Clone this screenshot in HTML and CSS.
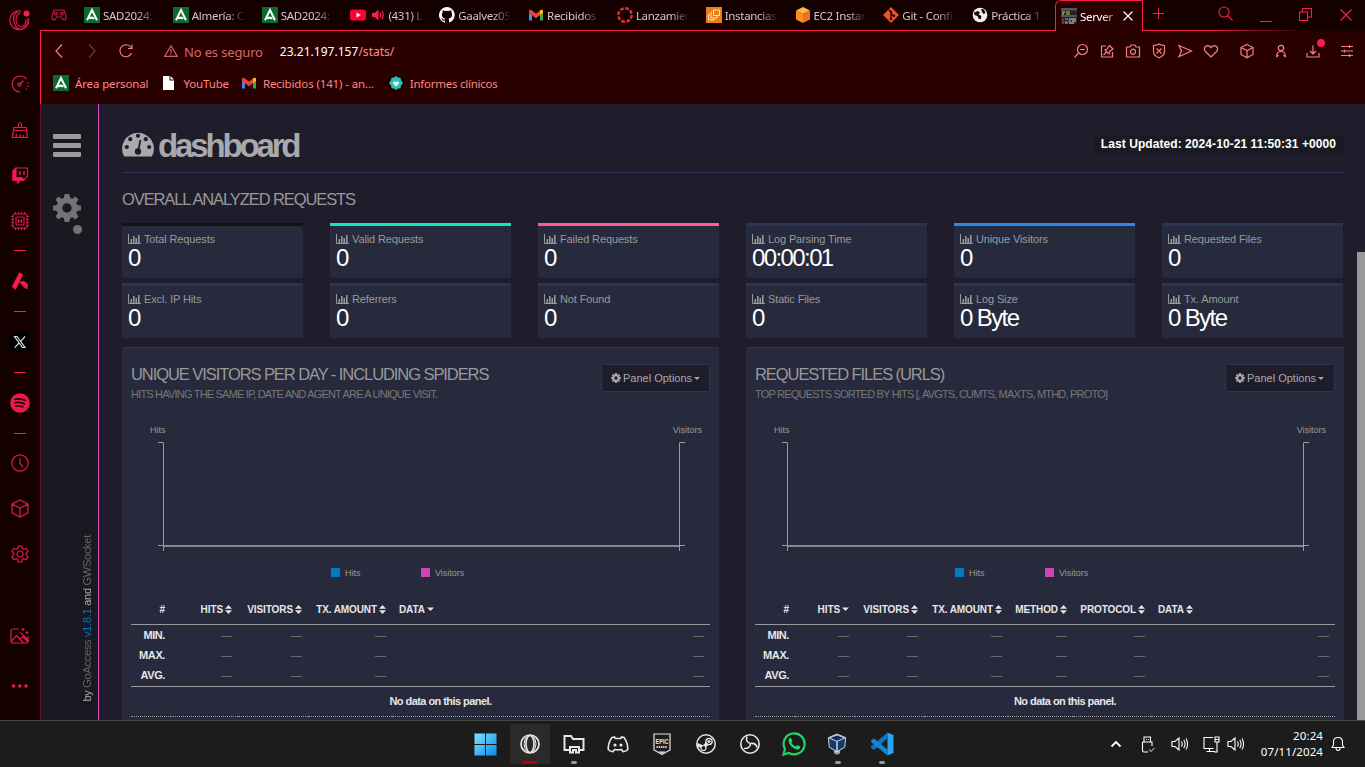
FILE: index.html
```html
<!DOCTYPE html>
<html lang="es">
<head>
<meta charset="utf-8">
<title>Server Statistics</title>
<link rel="stylesheet" href="styles.css">
</head>
<body>
<svg class="defs" aria-hidden="true">
  <symbol id="i-junta" viewBox="0 0 16 16"><rect width="16" height="16" fill="#0b6b2c"/><path d="M3 13.2 8 3l5 10.2M5 11.5q3.500-2 5 .5" fill="none" stroke="#fff" stroke-width="2"/></symbol>
  <symbol id="i-gmail" viewBox="0 0 16 16"><path d="M1 4.500h3V13.500H1z" fill="#4285f4"/><path d="M12 4.500h3v9h-3z" fill="#34a853"/><path d="M1 3.500Q2 2 4 3.500l4 3 4-3Q14 2 15 3.500V6l-7 5.200L1 6z" fill="#ea4335"/><path d="M12 3.500Q14 2 15 3.500V6l-3 2.200z" fill="#fbbc04"/></symbol>
  <symbol id="i-bars" viewBox="0 0 13 11"><path d="M.5 0v9.500H13" fill="none" stroke="currentColor"/><path d="M2.500 5h1.600v4H2.500zM5 2h1.600v7H5zM7.500 4h1.600v5H7.500zM10 1h1.600v8H10z" fill="currentColor"/></symbol>
  <symbol id="i-gear" viewBox="0 0 28 28"><path fill="currentColor" fill-rule="evenodd" d="M11.700 0h4.600l.8 3.800 2.200.9L22.500 2.500l3 3-2.200 3.200.9 2.200 3.800.8v4.600l-3.800.8-.9 2.200 2.200 3.200-3 3-3.200-2.200-2.200.9-.8 3.800h-4.600l-.8-3.800-2.200-.9-3.200 2.200-3-3 2.200-3.200-.9-2.200L0 16.300v-4.600l3.800-.8.9-2.200L2.500 5.500l3-3 3.200 2.200 2.200-.9zM14 9.300a4.700 4.700 0 1 0 0 9.400 4.700 4.700 0 0 0 0-9.400z"/></symbol>
  <symbol id="i-sort" viewBox="0 0 7 9"><path d="M0 3.700 3.500 0 7 3.700zM0 5.200 3.500 9 7 5.200z" fill="currentColor"/></symbol>
  <symbol id="i-down" viewBox="0 0 7 9"><path d="M0 2.500h7L3.500 6z" fill="currentColor"/></symbol>
  <symbol id="i-cube" viewBox="0 0 18 18"><path d="M9 1l7.500 3.800v8.400L9 17l-7.500-3.800V4.800zM1.500 4.800 9 8.500l7.500-3.700M9 8.500V17" fill="none" stroke="currentColor" stroke-width="1.200"/></symbol>
  <symbol id="i-speaker" viewBox="0 0 18 16"><path d="M1 5.500h3l4-3.500v12l-4-3.500H1zM10.500 5.500q1.500 2.500 0 5M12.800 4q2.500 4 0 8M15 2.500q3.200 5.500 0 11" fill="none" stroke="currentColor" stroke-width="1.100"/></symbol>
  <symbol id="i-axes" viewBox="0 0 579 112"><path d="M27 2.500h5.500V111M27 105.500h5.500M554 2.500h-5.500V111M554 105.500h-5.500" fill="none" stroke="#999"/><path d="M32 106h516" stroke="#999" stroke-width="2" opacity=".85"/></symbol>
</svg>

<div class="screen">
  <div class="browser">
    <nav class="rail">
      <div class="slot logo"><svg width="22" height="22" viewBox="0 0 22 22" fill="none" stroke="#dc1c47" stroke-width="1.200"><path d="M12 2a9.400 9.400 0 1 0 7.600 8"/><path d="M11.500 3.500q-5 2.500-4.500 8t6 7M13 17.500q4-1.500 4-7"/><path d="M9 2.500Q3 6 5 13t6 7M19 9q1 7-5 10"/><circle cx="17.500" cy="4.500" r="3" style="fill:#fa1e4e;stroke:none"/></svg></div>
      <div class="slot first"><svg width="18" height="18" viewBox="0 0 18 18"><path d="M9.500 17A8 8 0 1 1 15.500 4M17 7v1.500M17 10.500V12M15.800 13.700l-.8.9M8.500 9.500l4-4"/><circle cx="8.500" cy="9.500" r="1.700"/></svg></div>
      <div class="slot"><svg width="18" height="18" viewBox="0 0 18 18"><path d="M7.500 6.500V3q1.500-2.500 3 0v3.500M2.500 6.500h13v3h-13zM2.500 9.500 1.500 16.500h15l-1-7M5 16l.5-3M9 16v-3M12.500 16v-2"/></svg></div>
      <div class="slot twitch"><svg width="18" height="18" viewBox="0 0 18 18"><path d="M5 2h11.500v8.500l-4 4H9l-2.500 2.500v-2.500H2V5z"/><path d="M2 5l3-3v9.500H10l3 1.500-1 1.500H9L6.500 17v-2.500H2z" fill="#fa1e4e"/><path d="M9 5v4M13 5v4" stroke-width="1.500"/></svg></div>
      <div class="slot"><svg width="20" height="20" viewBox="0 0 20 20"><rect x="3" y="3" width="14" height="14" rx="2"/><rect x="6" y="6" width="8" height="8" rx="1"/><path d="M8.500 8v4M11.500 8v4M8.500 10h3M1 5.500h2M1 8.500h2M1 11.500h2M1 14.500h2M17 5.500h2M17 8.500h2M17 11.500h2M17 14.500h2M5.500 1v2M8.500 1v2M11.500 1v2M14.500 1v2M5.500 17v2M8.500 17v2M11.500 17v2M14.500 17v2"/></svg></div>
      <i class="dash one"></i>
      <div class="slot tall"><svg width="18" height="18" viewBox="0 0 18 18"><path d="M8.500 1 11.500 3 4.500 17 1.500 14.500zM9 10.500q5-2.500 7.500 2.500l-.5 3.500q-2.500-1-3.700-2.700T9 10.500z" fill="#fa1e4e" stroke-linejoin="round"/></svg></div>
      <i class="dash"></i>
      <div class="slot tall"><span class="xbox"><svg class="xlogo" width="14" height="14" viewBox="0 0 14 14"><path d="M1.500 1.500h2.500l8 11h-2.500zM12 1.500 7.700 6.300M6 8l-4.300 4.700"/></svg></span></div>
      <i class="dash"></i>
      <div class="slot tall"><svg width="20" height="20" viewBox="0 0 20 20"><circle cx="10" cy="10" r="9.800" fill="#ec1b4b" stroke="none"/><path d="M4 6.500q6.500-1.800 12 1.200M4.500 10q5.500-1.500 10.500 1.200M5 13.200q4.500-1 8.500 1" stroke="#300010" stroke-width="1.800"/></svg></div>
      <i class="dash"></i>
      <div class="slot hist"><svg width="18" height="18" viewBox="0 0 18 18"><circle cx="9" cy="9" r="8.200"/><path d="M9 4.500v4.800l3 3.700"/></svg></div>
      <div class="slot low"><svg width="20" height="19"><use href="#i-cube"/></svg></div>
      <div class="slot low"><svg width="18" height="18" viewBox="0 0 18 18"><path d="M7.300 1h3.400l.6 2.500 1.500.8 2.500-.8 1.700 3L15.200 8.200v1.600l1.800 1.700-1.700 3-2.500-.8-1.500.8-.6 2.500H7.300l-.6-2.500-1.500-.8-2.500.8-1.700-3 1.800-1.700V8.200L1 6.500l1.700-3 2.500.8 1.500-.8z"/><circle cx="9" cy="9" r="3"/></svg></div>
      <div class="slot pic"><svg width="20" height="18" viewBox="0 0 20 18"><path d="M9 2H3Q1 2 1 4v10q0 2 2 2h13q2 0 2-2V9M1.500 14l5-5.500 7 7.500M10 12l3-2.500 4.500 5M11 6l8 8M13 1v3M11.500 2.500h3M17 4v3M15.500 5.500h3M10 5v.8"/></svg></div>
      <div class="slot more"><svg width="18" height="6" viewBox="0 0 18 6"><g fill="#fa1e4e" stroke="none"><circle cx="2.500" cy="3" r="1.700"/><circle cx="8.800" cy="3" r="1.700"/><circle cx="15" cy="3" r="1.700"/></g></svg></div>
    </nav>

    <div class="window">
      <header class="tabs">
        <span class="gx"><svg width="16" height="12" viewBox="0 0 16 12" fill="none" stroke="#c01a40" stroke-width="1.200"><path d="M3.500 1h9Q14.500 3 15 9q-1 3-3 1.500L10.500 8h-5L4 10.500Q2 12 1 9 1.500 3 3.500 1z"/><circle cx="5" cy="4.700" r="1.300"/><circle cx="11" cy="4.700" r="1.300"/></svg></span>
        <div class="tab"><svg><use href="#i-junta"/></svg><span>SAD2024:</span></div>
        <div class="tab"><svg><use href="#i-junta"/></svg><span>Almería: C</span></div>
        <div class="tab"><svg><use href="#i-junta"/></svg><span>SAD2024:</span></div>
        <div class="tab"><svg viewBox="0 0 16 16"><rect y="2.500" width="16" height="11" rx="3" fill="#f03"/><path d="M6.500 5.500 11 8l-4.500 2.500z" fill="#fff"/></svg><svg class="snd" viewBox="0 0 14 14"><path d="M1 5h2.500L7.500 1.500v11L3.500 9H1z" fill="#fa1e4e"/><path d="M9 4.500q1.500 2.500 0 5M11 3q2.500 4 0 8" fill="none" stroke="#fa1e4e" stroke-width="1.300"/></svg><span>(431) L</span></div>
        <div class="tab"><svg viewBox="0 0 16 16"><path fill="#fff" d="M8 0a8 8 0 0 0-2.500 15.600c.4 0 .5-.2.5-.4v-1.500c-2.200.5-2.700-1-2.700-1-.4-.9-.9-1.200-.9-1.200-.7-.5.100-.5.100-.5.8.100 1.200.8 1.200.8.700 1.200 1.900.9 2.300.7.100-.5.300-.9.500-1.100-1.800-.2-3.600-.9-3.600-4 0-.9.300-1.600.8-2.100-.100-.2-.4-1 .100-2.100 0 0 .7-.2 2.200.8a7.500 7.500 0 0 1 4 0c1.500-1 2.200-.8 2.200-.8.500 1.100.200 1.900.1 2.100.5.600.8 1.300.8 2.100 0 3.100-1.900 3.700-3.600 3.900.3.300.5.800.5 1.500v2.300c0 .2.100.5.500.4A8 8 0 0 0 8 0z"/></svg><span>Gaalvez05</span></div>
        <div class="tab"><svg><use href="#i-gmail"/></svg><span>Recibidos</span></div>
        <div class="tab"><svg viewBox="0 0 16 16"><circle cx="8" cy="8" r="6.700" fill="none" stroke="#e0322d" stroke-width="2.500" stroke-dasharray="3.700 1.560"/></svg><span>Lanzamien</span></div>
        <div class="tab"><svg viewBox="0 0 16 16"><rect width="16" height="16" fill="#ed7d10"/><path d="M7.500 3h6v5.500h-6zM6 5.500H5V11h6V9M4 7.500H2.500V13H8v-1.500" fill="none" stroke="#ffe3c4"/></svg><span>Instancias</span></div>
        <div class="tab"><svg viewBox="0 0 16 16"><path d="M8 0l7 3.500L8 7 1 3.500z" fill="#ffb74a"/><path d="M1 3.500 8 7v9l-7-3.500z" fill="#fb9122"/><path d="M15 3.500 8 7v9l7-3.500z" fill="#f5701b"/></svg><span>EC2 Instan</span></div>
        <div class="tab"><svg viewBox="0 0 16 16"><path d="M8 0l8 8-8 8-8-8z" fill="#f34f29"/><path d="M5.500 2.500 8 5v7M8 6.500l3 3" fill="none" stroke="#1b0000" stroke-width="1.200"/><circle cx="8" cy="5" r="1.200" fill="#1b0000"/><circle cx="8" cy="12" r="1.200" fill="#1b0000"/><circle cx="11" cy="8.800" r="1.200" fill="#1b0000"/></svg><span>Git - Confi</span></div>
        <div class="tab"><svg viewBox="0 0 16 16"><circle cx="8" cy="8" r="7.300" fill="#eef0f2"/><path d="M2 5.500 6 4l2 1.500-1.500 2 3 1.500-1 3.500-2-1L5.500 9 2.500 8zM9 2l3 .5 1.500 3.500-2 1-1.500-2z" fill="#1b0000"/></svg><span>Práctica 1.</span></div>
        <div class="tab active"><svg viewBox="0 0 16 16"><rect width="16" height="16" fill="#222"/><path d="M0 0h16v2.500H0zM0 7h16v2H0z" fill="#555"/><path d="M1 4h3M1 6h2" stroke="#ddd"/><path d="M5 4h4M5 6h4M4 14h2" stroke="#a6d81c"/><path d="M1 11h2M1 13h2M1 15h2" stroke="#fa1e6e"/><path d="M4 11h3M7 13h3M4 15h3" stroke="#8ad"/><path d="M8 11h7M11 13h4M8 15h5" stroke="#ddd"/></svg><span>Server</span><svg class="x" viewBox="0 0 10 10"><path d="M.5.5l9 9M9.500.5l-9 9" stroke="#fff" stroke-width="1.200"/></svg></div>
        <div class="tabend">
          <svg width="11" height="11" viewBox="0 0 11 11"><path d="M5.500 0v11M0 5.500h11"/></svg>
          <svg class="find" width="15" height="15" viewBox="0 0 15 15"><circle cx="6" cy="6" r="5"/><path d="M9.500 9.500 14.500 14.500"/></svg>
          <svg class="min" width="12" height="12" viewBox="0 0 12 12"><path d="M0 10.500h12"/></svg>
          <svg class="max" width="13" height="13" viewBox="0 0 13 13"><path d="M.5 4h8v8.500h-8zM3.500 4V.500h9v8.500H8.500"/></svg>
          <svg class="cls" width="12" height="12" viewBox="0 0 12 12"><path d="M.5.5l11 11M11.500.5l-11 11"/></svg>
        </div>
      </header>

      <div class="toolbar">
        <div class="address">
          <svg width="8" height="14" viewBox="0 0 8 14"><path d="M7 .5 1 7l6 6.500"/></svg>
          <svg class="fwd" width="8" height="14" viewBox="0 0 8 14"><path d="M1 .5 7 7l-6 6.500"/></svg>
          <svg class="reload" width="14" height="14" viewBox="0 0 14 14"><path d="M12.500 9A6 6 0 1 1 12 3.500M13 .5v4H9"/></svg>
          <svg class="warn" width="14" height="12" viewBox="0 0 14 12"><path d="M7 .8 13.200 11.300H.8zM7 4v4M7 9v1"/></svg>
          <span class="insecure">No es seguro</span>
          <span class="url"><b>23.21.197.157</b>/stats/</span>
          <div class="tools">
            <svg viewBox="0 0 16 16"><circle cx="9.500" cy="6.500" r="5"/><path d="M5.500 10 1.500 14.500M7 6.500h5"/></svg>
            <svg viewBox="0 0 16 16"><path d="M7 3H2.500v11h11V9M4.500 12l3-3M6 7l4 4 1-3 3-2-3.500-3.500L8 6z"/></svg>
            <svg viewBox="0 0 16 16"><path d="M1.500 4H5l1-2h4l1 2h3.500v10h-13z"/><circle cx="8" cy="8.700" r="2.500"/></svg>
            <svg viewBox="0 0 16 16"><path d="M8 1q2.500 1.500 5.500 1.500v6Q13.500 12.500 8 15 2.500 12.500 2.500 8.500v-6Q5.500 2.500 8 1zM5.500 5.500l5 5M10.500 5.500l-5 5"/></svg>
            <svg viewBox="0 0 16 16"><path d="M2 2.500 14.500 8 2 13.500 4.500 8z"/></svg>
            <svg viewBox="0 0 16 16"><path d="M8 14 2.200 8.300Q.5 5.500 2.500 3.500 5.500 1.500 8 4.500q2.500-3 5.500-1 2 2 .3 4.800z"/></svg>
            <svg class="cube" viewBox="0 0 16 16"><path d="M8 1.500l6 3v7L8 14.700l-6-3.200v-7zM2 4.500l6 3 6-3M8 7.500v7"/></svg>
            <svg class="user" viewBox="0 0 16 16"><circle cx="8" cy="5" r="2.700"/><path d="M3.500 14Q3.500 8.500 8 8.500t4.500 5.500M3.500 14l2-2M12.500 14l-2-2"/></svg>
            <span class="dl"><svg viewBox="0 0 16 16"><path d="M2 10v4h12v-4M8 2.500V11M5 8l3 3 3-3"/></svg></span>
            <svg class="menu" viewBox="0 0 16 16"><path d="M2 3.500h12M2 8h12M2 12.500h12M10.500 2v3M5.500 6.500v3M10.500 11v3"/></svg>
          </div>
        </div>
        <div class="bookmarks">
          <a><svg><use href="#i-junta"/></svg>Área personal</a>
          <a class="b2"><svg viewBox="0 0 16 16"><path d="M2 1h6.500v4.500H13V15H2z" fill="#fff"/><path d="M9.500 1 13 4.500H9.500z" fill="#fff"/></svg>YouTube</a>
          <a class="b3"><svg><use href="#i-gmail"/></svg>Recibidos (141) - an...</a>
          <a class="b4"><svg viewBox="0 0 16 16"><path d="M8 1l2 1.500 2.500.2.500 2.500L15 8l-2 2.500-.5 2.700-2.500.3L8 15l-2-1.500-2.500-.3L3 10.500 1 8l2-2.800.5-2.500L6 2.500z" fill="#27c4bd"/><path d="M8 11.500 5 8.300Q5 5.500 8 7q3-1.500 3 1.300z" fill="#fff"/></svg>Informes clínicos</a>
        </div>
      </div>

      <div class="page">
        <aside class="side">
          <div class="burger"><i></i><i></i><i></i></div>
          <svg class="cog"><use href="#i-gear"/></svg>
          <i class="dot"></i>
          <p class="by">by <span>GoAccess</span> <a>v1.8.1</a> and <span>GWSocket</span></p>
        </aside>
        <main class="main">
          <div class="head">
            <h1><svg width="32" height="26" viewBox="0 0 32 26"><path fill="#a9a9ab" d="M2.200 25.600A15.900 15.900 0 1 1 29.800 25.600z"/><g fill="#1f1d2c"><circle cx="4.800" cy="16" r="2.100"/><circle cx="8.200" cy="8.200" r="2.100"/><circle cx="16" cy="4.800" r="2.100"/><circle cx="23.800" cy="8.200" r="2.100"/><circle cx="27.200" cy="16" r="2.100"/><circle cx="16" cy="20.500" r="3.200"/></g><path d="M16 20.500 18.500 9" stroke="#1f1d2c" stroke-width="1.800"/></svg>dashboard</h1>
            <span class="updated">Last Updated: 2024-10-21 11:50:31 +0000</span>
          </div>
          <h2>OVERALL ANALYZED REQUESTS</h2>
          <div class="cards">
            <div class="card black"><p><svg><use href="#i-bars"/></svg>Total Requests</p><b>0</b></div>
            <div class="card green"><p><svg><use href="#i-bars"/></svg>Valid Requests</p><b>0</b></div>
            <div class="card red"><p><svg><use href="#i-bars"/></svg>Failed Requests</p><b>0</b></div>
            <div class="card"><p><svg><use href="#i-bars"/></svg>Log Parsing Time</p><b>00:00:01</b></div>
            <div class="card blue"><p><svg><use href="#i-bars"/></svg>Unique Visitors</p><b>0</b></div>
            <div class="card"><p><svg><use href="#i-bars"/></svg>Requested Files</p><b>0</b></div>
            <div class="card"><p><svg><use href="#i-bars"/></svg>Excl. IP Hits</p><b>0</b></div>
            <div class="card"><p><svg><use href="#i-bars"/></svg>Referrers</p><b>0</b></div>
            <div class="card"><p><svg><use href="#i-bars"/></svg>Not Found</p><b>0</b></div>
            <div class="card"><p><svg><use href="#i-bars"/></svg>Static Files</p><b>0</b></div>
            <div class="card"><p><svg><use href="#i-bars"/></svg>Log Size</p><b>0 Byte</b></div>
            <div class="card"><p><svg><use href="#i-bars"/></svg>Tx. Amount</p><b>0 Byte</b></div>
          </div>
          <div class="panels">
            <section class="panel">
              <div class="ptop"><div><h3>UNIQUE VISITORS PER DAY - INCLUDING SPIDERS</h3><p>HITS HAVING THE SAME IP, DATE AND AGENT ARE A UNIQUE VISIT.</p></div><button><svg class="g"><use href="#i-gear"/></svg>Panel Options<i class="caret"></i></button></div>
              <div class="axis"><span>Hits</span><span>Visitors</span></div>
              <svg class="chart"><use href="#i-axes"/></svg>
              <div class="legend"><span><i class="hits"></i>Hits</span><span><i class="vis"></i>Visitors</span></div>
              <table>
                <colgroup><col class="c40"><col class="c67"><col class="c70"><col class="c84"><col></colgroup>
                <thead><tr><th>#</th><th>HITS<svg><use href="#i-sort"/></svg></th><th>VISITORS<svg><use href="#i-sort"/></svg></th><th>TX. AMOUNT<svg><use href="#i-sort"/></svg></th><th class="l">DATA<svg><use href="#i-down"/></svg></th></tr></thead>
                <tbody>
                  <tr><th>MIN.</th><td>—</td><td>—</td><td>—</td><td>—</td></tr>
                  <tr><th>MAX.</th><td>—</td><td>—</td><td>—</td><td>—</td></tr>
                  <tr><th>AVG.</th><td>—</td><td>—</td><td>—</td><td>—</td></tr>
                </tbody>
                <tfoot><tr><td colspan="5">No data on this panel.</td></tr></tfoot>
              </table>
            </section>
            <section class="panel">
              <div class="ptop"><div><h3>REQUESTED FILES (URLS)</h3><p>TOP REQUESTS SORTED BY HITS [, AVGTS, CUMTS, MAXTS, MTHD, PROTO]</p></div><button><svg class="g"><use href="#i-gear"/></svg>Panel Options<i class="caret"></i></button></div>
              <div class="axis"><span>Hits</span><span>Visitors</span></div>
              <svg class="chart"><use href="#i-axes"/></svg>
              <div class="legend"><span><i class="hits"></i>Hits</span><span><i class="vis"></i>Visitors</span></div>
              <table>
                <colgroup><col class="c40"><col class="c60"><col class="c69"><col class="c84"><col class="c65"><col class="c78"><col></colgroup>
                <thead><tr><th>#</th><th>HITS<svg><use href="#i-down"/></svg></th><th>VISITORS<svg><use href="#i-sort"/></svg></th><th>TX. AMOUNT<svg><use href="#i-sort"/></svg></th><th>METHOD<svg><use href="#i-sort"/></svg></th><th>PROTOCOL<svg><use href="#i-sort"/></svg></th><th class="l">DATA<svg><use href="#i-sort"/></svg></th></tr></thead>
                <tbody>
                  <tr><th>MIN.</th><td>—</td><td>—</td><td>—</td><td>—</td><td>—</td><td>—</td></tr>
                  <tr><th>MAX.</th><td>—</td><td>—</td><td>—</td><td>—</td><td>—</td><td>—</td></tr>
                  <tr><th>AVG.</th><td>—</td><td>—</td><td>—</td><td>—</td><td>—</td><td>—</td></tr>
                </tbody>
                <tfoot><tr><td colspan="7">No data on this panel.</td></tr></tfoot>
              </table>
            </section>
          </div>
        </main>
        <div class="scroll"><i></i></div>
      </div>
    </div>
  </div>

  <footer class="taskbar">
    <div class="apps">
      <div class="app win"><svg width="23" height="23" viewBox="0 0 24 24"><defs><linearGradient id="win" x2="1" y2="1"><stop stop-color="#7fe3fc"/><stop offset="1" stop-color="#0a8af0"/></linearGradient></defs><path fill="url(#win)" d="M.5.5h11v11H.5zM12.500.5h11v11h-11zM.5 12.500h11v11H.5zM12.500 12.500h11v11h-11z"/></svg></div>
      <div class="app on"><svg width="20" height="20" viewBox="0 0 20 20" fill="none" stroke="#e6e6e6" stroke-width="1.700"><circle cx="10" cy="10" r="9"/><ellipse cx="10" cy="10" rx="4" ry="8.500"/><path d="M12 1.500q4 3 4 8.500t-4 8.500M8 1.500q-4 3-4 8.500t4 8.500" stroke-width="1"/></svg></div>
      <div class="app run"><svg width="22" height="20" viewBox="0 0 22 20" fill="none" stroke="#e6e6e6" stroke-width="2"><path d="M6 16H1.500V2H8l2 3h10.500v11H17M7 18.500V13h9v5.500h-3V16h-3v2.500z"/></svg></div>
      <div class="app"><svg width="22" height="18" viewBox="0 0 22 18" fill="none" stroke="#e6e6e6" stroke-width="1.600"><path d="M7.500 2 5 2.500Q1 8 1.200 14.500q2 2 4.800 2.200l1.500-2.200q3.500.8 7 0l1.500 2.200q2.800-.2 4.800-2.200Q21 8 17 2.500L14.500 2l-.8 1.500H8.300z"/><circle cx="8" cy="10" r="1.600" fill="#e6e6e6" stroke="none"/><circle cx="14" cy="10" r="1.600" fill="#e6e6e6" stroke="none"/></svg></div>
      <div class="app"><svg width="18" height="22" viewBox="0 0 18 22"><path d="M1 1h16v16l-8 4.500L1 17z" fill="none" stroke="#e6e6e6" stroke-width="1.200"/><path d="M5 18.500h8L9 20.500z" fill="#e6e6e6"/><text x="9" y="11" textLength="13" lengthAdjust="spacingAndGlyphs" class="epic">EPIC</text><path d="M3.500 14h11" stroke="#ccc" stroke-width="2" stroke-dasharray="1.500 .7"/></svg></div>
      <div class="app"><svg width="20" height="20" viewBox="0 0 20 20"><circle cx="10" cy="10" r="9.200" fill="none" stroke="#e6e6e6" stroke-width="1.500"/><path d="M1 10.500 8 13.500M7 14l5.500-6" stroke="#e6e6e6" stroke-width="3.500"/><circle cx="13" cy="7.500" r="3.800" fill="#e6e6e6"/><circle cx="13" cy="7.500" r="2" fill="#e6e6e6" stroke="#1c1c1c"/><circle cx="7.500" cy="14" r="2.500" fill="#1c1c1c" stroke="#e6e6e6" stroke-width="1.200"/></svg></div>
      <div class="app"><svg width="20" height="20" viewBox="0 0 20 20" fill="none" stroke="#e6e6e6" stroke-width="1.600"><circle cx="10" cy="10" r="9.200"/><path d="M7 2.500Q5 8 10.500 9.500q5.500-1 6.500 4M10.500 9.500Q10 15 4 14.500"/></svg></div>
      <div class="app"><svg width="24" height="24" viewBox="0 0 24 24"><path d="M1.500 22.500 3 17A10.500 10.500 0 1 1 7 21z" fill="none" stroke="#25d366" stroke-width="2.200"/><path d="M7 7q1-2 2.300-.6l1 2.400q0 .7-1 1.600 1.500 3 4.500 4.200l1.500-1.600 3 1.400q.5 2-1.800 3-3 .8-7-3T7 7z" fill="#25d366"/></svg></div>
      <div class="app run vbox"><svg width="20" height="24" viewBox="0 0 22 24"><circle cx="11" cy="20" r="3.500" fill="#9ab"/><path d="M11 1l9.500 4-1 10.500L11 20.500 2.500 15.500 1.500 5z" fill="#173a6b" stroke="#dfe6f0"/><path d="M11 2l8.500 3.500L11 9 2.500 5.500z" fill="#102c55" stroke="#dfe6f0"/><path d="M11 9v11.500" stroke="#dfe6f0" stroke-width="1.500"/></svg></div>
      <div class="app run"><svg width="24" height="24" viewBox="0 0 24 24"><path d="M17.500.5v6L4 18l-3-2.200v-1.300z" fill="#0b75c0"/><path d="M17.500 23.500v-6L4 6.500 1 8.500V10z" fill="#1187d3"/><path d="M17.500.5 23.500 3v18l-6 2.500z" fill="#2ba3f0"/></svg></div>
    </div>
    <div class="tray">
      <svg width="12" height="12" viewBox="0 0 12 12"><path d="M1.500 8.500 6 4l4.500 4.500" stroke-width="1.800"/></svg>
      <svg class="usb" width="14" height="17" viewBox="0 0 14 17"><path d="M3 6V1h6.500v5M1.500 6H11v4M1.500 6v8.500Q1.500 16 3 16h4M5 3.500h.8M7 3.500h.8"/><path d="M8 13.500l2 2 3.500-3.500" stroke="#999"/></svg>
      <svg class="sp1" width="18" height="16"><use href="#i-speaker"/></svg>
      <svg class="mon" width="17" height="17" viewBox="0 0 17 17"><path d="M10 1.500H1v11h9.500M3.500 15.500h8.500M6.500 12.500v3M12 1h4v5h-4zM14 6v10h-3M12.500 3.500h3"/></svg>
      <svg class="sp2" width="18" height="16"><use href="#i-speaker"/></svg>
      <div class="clock"><span>20:24</span><span>07/11/2024</span></div>
      <svg class="bell" width="14" height="16" viewBox="0 0 14 16"><path d="M1 11.500 2.500 9V6Q2.500 1.500 7 1.500T11.500 6v3l1.500 2.500zM5 12q0 2.500 2 2.500T9 12"/></svg>
    </div>
  </footer>
</div>
</body>
</html>
```
FILE: styles.css
```css
* { box-sizing: border-box; }
body, h1, h2, h3, p { margin: 0; }
body { width: 1365px; height: 767px; overflow: hidden; background: #1c1c1c; font-family: "Liberation Sans", Arial, sans-serif; }
svg { display: block; flex: none; }
.defs { position: absolute; width: 0; height: 0; }
.screen { display: flex; flex-direction: column; height: 767px; }
.browser { display: flex; height: 720px; overflow: hidden; }

/* Left rail */
.rail { width: 40px; flex: none; background: #150000; display: flex; flex-direction: column; color: #dc1c47; }
.slot { height: 46px; flex: none; display: flex; align-items: center; justify-content: center; }
.rail svg { fill: none; stroke: #dc1c47; stroke-width: 1.2; }
.rail .xlogo { stroke: #ddd; }
.rail .logo { height: 40px; }
.rail .first { margin-top: 21px; }
.rail .twitch { height: 45px; padding-bottom: 1px; }
.rail .low { height: 45px; }
.rail .tall { height: 50px; }
.rail .hist { height: 47px; }
.rail .pic { margin-top: 37px; }
.rail .more { margin-top: 4px; }
.dash { height: 11px; flex: none; display: flex; align-items: center; justify-content: center; }
.dash.one { height: 12px; }
.dash::before { content: ""; width: 12px; height: 1px; background: #fa1e4e; }
.xbox { width: 20px; height: 20px; border-radius: 4px; background: #000; display: flex; align-items: center; justify-content: center; }

/* Tab strip */
.window { flex: 1; min-width: 0; display: flex; flex-direction: column; }
.tabs { height: 31px; flex: none; background: #150000; display: flex; font: 11.5px "Noto Sans", sans-serif; color: #d0c8c8; background-image: linear-gradient(90deg, #fa1e4e 0, #fa1e4e 88%, transparent 96%); background-size: 100% 1px; background-position: 0 30px; background-repeat: no-repeat; }
.gx { width: 38px; padding: 9px 0 0 11px; flex: none; }
.tab { flex: 1; min-width: 0; height: 30px; display: flex; align-items: center; padding-left: 6px; }
.tab > svg { width: 16px; height: 16px; }
.tab > .snd { width: 14px; height: 14px; margin-left: 5px; }
.tab span { margin-left: 3px; flex: 1; min-width: 0; margin-right: 6px; white-space: nowrap; letter-spacing: -.3px; mask-image: linear-gradient(90deg, #000 60%, transparent 92%); -webkit-mask-image: linear-gradient(90deg, #000 60%, transparent 92%); }
.tab.active { flex: none; width: 88px; height: 31px; background: #280000; border: 1px solid #fa1e4e; border-bottom: 0; border-radius: 6px 2px 0 0; padding-left: 5px; color: #fff; }
.tab.active span { margin-right: 7px; mask-image: linear-gradient(90deg, #000 60%, #0006); -webkit-mask-image: linear-gradient(90deg, #000 60%, #0006); }
.tab > .x { width: 10px; height: 10px; margin-right: 9px; }
.tabend { width: 222px; flex: none; display: flex; align-items: center; padding: 0 0 4px 10px; }
.tabend svg { fill: none; stroke: #fa1e4e; stroke-width: 1.1; }
.tabend .find { margin-left: 54px; }
.tabend .min { margin: 7px 0 0 27px; }
.tabend .max { margin: 2px 0 0 27px; }
.tabend .cls { margin: 2px 0 0 28px; }

/* Toolbar */
.toolbar { height: 73px; flex: none; background: #280000; border-left: 1px solid #fa1e4e; font-family: "Noto Sans", sans-serif; }
.address { height: 40px; display: flex; align-items: center; padding-left: 14px; color: #f77; }
.address svg { fill: none; stroke: #f58080; stroke-width: 1.2; }
.address .fwd { margin-left: 25px; opacity: .4; }
.address .reload { margin-left: 23px; }
.address .warn { margin-left: 31px; opacity: .8; }
.insecure { font-size: 13px; margin-left: 6px; color: #d96868; letter-spacing: -.15px; padding-top: 1px; }
.url { font-size: 12px; margin-left: 17px; color: #ff8c8c; letter-spacing: .02px; }
.url b { font-weight: 400; color: #fff; }
.tools { margin-left: auto; display: flex; padding-right: 10px; gap: 10px; align-items: center; }
.tools svg { width: 16px; height: 16px; }
.tools .cube { margin-left: 10px; }
.tools .user { margin-left: 8px; }
.dl { position: relative; margin-left: 6px; }
.dl::after { content: ""; position: absolute; width: 8px; height: 8px; border-radius: 4px; background: #fa1e4e; right: -4px; top: -4px; }
.tools .menu { margin-left: 8px; }
.bookmarks { display: flex; align-items: center; height: 24px; font-size: 11.5px; color: #ff8585; padding-left: 12px; letter-spacing: -.13px; }
.bookmarks a { display: flex; align-items: center; white-space: nowrap; }
.bookmarks svg { width: 16px; height: 16px; margin-right: 6px; }
.bookmarks .b2 { margin-left: 13px; }
.bookmarks .b3 { margin-left: 12px; }
.bookmarks .b4 { margin-left: 14px; letter-spacing: -.25px; }

/* Page */
.page { flex: 1; min-height: 0; display: flex; background: #1f1d2c; border-left: 1px solid #6c0c25; }
.side { width: 58px; flex: none; background: #1a1922; border-right: 1px solid #d84cc0; display: flex; flex-direction: column; padding: 30px 0 0 12px; color: #737374; }
.burger { display: flex; flex-direction: column; gap: 4px; }
.burger i { width: 28px; height: 5px; border-radius: 1px; background: #9b9b9b; }
.cog { width: 28px; height: 28px; margin-top: 37px; }
.dot { width: 9px; height: 9px; border-radius: 5px; background: #737374; margin: 3px 0 0 20px; }
.by { margin: auto 0 18px 27px; writing-mode: vertical-rl; transform: rotate(180deg); font-size: 11px; line-height: 14px; width: 14px; color: #aaa; letter-spacing: -.27px; white-space: nowrap; }
.by span { color: #666; }
.by a { color: #007bc3; }
.main { flex: 1; min-width: 0; padding: 0 13px 0 23px; color: #999; overflow: hidden; }
.head { height: 69px; display: flex; justify-content: space-between; border-bottom: 1px solid #2b3452; }
.head h1 { display: flex; align-items: flex-start; font-size: 33px; line-height: 38px; letter-spacing: -3.15px; color: #a9a9ab; padding-top: 23px; }
.head h1 svg { margin: 4px 4px 0 0; }
.updated { height: 18px; margin-top: 32px; padding: 0 8px 0 7px; border-radius: 3px; background: #1a1a22; color: #fff; font: bold 12px/16px "Liberation Sans", Arial, sans-serif; letter-spacing: .07px; }
h2 { font-weight: 400; font-size: 16.5px; line-height: 20px; letter-spacing: -1.1px; padding: 16px 0 14px; height: 50px; }
.cards { display: grid; grid-template-columns: repeat(6, 181px); gap: 5px 27px; }
.card { height: 55px; background: #272a3c; border-top: 3px solid #2b3452; padding: 6px 6px 0; }
.card p { font-size: 11px; line-height: 14px; display: flex; align-items: center; letter-spacing: -.13px; }
.card svg { width: 13px; height: 11px; margin-right: 3px; }
.card b { display: block; color: #fff; font-weight: 400; font-size: 24px; line-height: 24px; letter-spacing: -1.6px; }
.black { border-color: #101214; }
.green { border-color: #0be9bd; }
.red { border-color: #ff5c93; }
.blue { border-color: #268bec; }
.panels { display: grid; grid-template-columns: 597px 598px; gap: 27px; margin-top: 9px; }
.panel { height: 380px; background: #272a3c; border-top: 1px solid #2b3452; padding: 16px 9px 0; }
.ptop { display: flex; justify-content: space-between; height: 60px; }
.ptop h3 { font-weight: 400; font-size: 16.5px; line-height: 21px; letter-spacing: -1.07px; white-space: nowrap; }
.ptop p { font-size: 11px; line-height: 16px; letter-spacing: -.8px; color: #777; margin-top: 1px; white-space: nowrap; }
button { width: 109px; height: 28px; flex: none; border: 1px solid #2b3452; border-radius: 2px; background: #1f1d2c; color: #aaa; font: 11px "Liberation Sans", Arial, sans-serif; display: flex; align-items: center; padding: 0 0 0 9px; white-space: nowrap; }
.panel + .panel button { width: 110px; }
button .g { width: 10px; height: 10px; margin-right: 2px; }
.caret { border: 3.500px solid transparent; border-top-color: #aaa; border-bottom: 0; margin-left: 2px; }
.axis { display: flex; justify-content: space-between; font-size: 9px; line-height: 10px; padding: 1px 8px 0 19px; height: 16px; }
.panel + .panel .axis { padding-right: 9px; }
.chart { width: 579px; height: 112px; }
.legend { display: flex; font-size: 9px; line-height: 11px; padding: 15px 0 0 200px; height: 42px; }
.legend span { display: flex; align-items: flex-start; width: 90px; height: 12px; line-height: 13px; }
.legend i { width: 9px; height: 9px; margin: 1px 5px 0 0; }
.hits { background: #007bc3; }
.vis { background: #d044b0; }
table { width: 100%; table-layout: fixed; border-collapse: collapse; }
.c40 { width: 40px; } .c60 { width: 60px; } .c65 { width: 65px; } .c67 { width: 67px; } .c69 { width: 69px; } .c70 { width: 70px; } .c78 { width: 78px; } .c84 { width: 84px; }
th, td { padding: 0 6px 0 0; text-align: right; white-space: nowrap; }
thead th { height: 30px; padding-top: 2px; font-size: 10px; color: #e6e6e6; letter-spacing: -.1px; border-bottom: 1px solid #999; }
thead svg { display: inline-block; width: 7px; height: 9px; margin-left: 2px; vertical-align: -1px; }
thead th.l { text-align: left; padding-left: 7px; }
tbody th, tbody td { height: 20px; font-size: 11px; line-height: 12px; }
tbody tr:first-child > * { height: 21px; }
tbody th { color: #e6e6e6; letter-spacing: -.4px; }
tbody td { color: #777; }
tbody tr:last-child > * { height: 21px; border-bottom: 1px solid #999; }
tfoot td { text-align: center; font-weight: bold; font-size: 11px; color: #e6e6e6; letter-spacing: -.55px; height: 30px; border-bottom: 1px dotted #999; padding-left: 46px; }
.scroll { width: 8px; flex: none; padding-top: 148px; display: flex; }
.scroll i { flex: 1; background: #999; }

/* Taskbar */
.taskbar { height: 47px; flex: none; background: #1c1c1c; border-top: 1px solid #444; display: flex; }
.apps { display: flex; padding-left: 464px; }
.app { width: 44px; height: 46px; display: flex; align-items: center; justify-content: center; position: relative; }
.win, .vbox { padding-right: 2px; }
.on { background: linear-gradient(#2a2a2a, #2a2a2a) 2px 3px / 40px 40px no-repeat; border-radius: 4px; }
.on::after, .run::after { content: ""; position: absolute; left: 19px; bottom: 3px; width: 6px; height: 3px; border-radius: 2px; background: #999; }
.on::after { left: 14px; width: 16px; background: #b80000; }
.epic { font: bold 7px "Liberation Sans", sans-serif; fill: #e6e6e6; text-anchor: middle; }
.tray { margin-left: auto; display: flex; align-items: center; padding-right: 20px; color: #fff; }
.tray > svg { fill: none; stroke: #fff; stroke-width: 1.1; }
.usb { margin-left: 19px; }
.sp1 { margin-left: 16px; }
.mon { margin-left: 14px; }
.sp2 { margin-left: 7px; }
.clock { width: 78px; font: 11.5px/16px "Noto Sans", sans-serif; text-align: right; display: flex; flex-direction: column; letter-spacing: .1px; }
.bell { margin-left: 8px; }
```
